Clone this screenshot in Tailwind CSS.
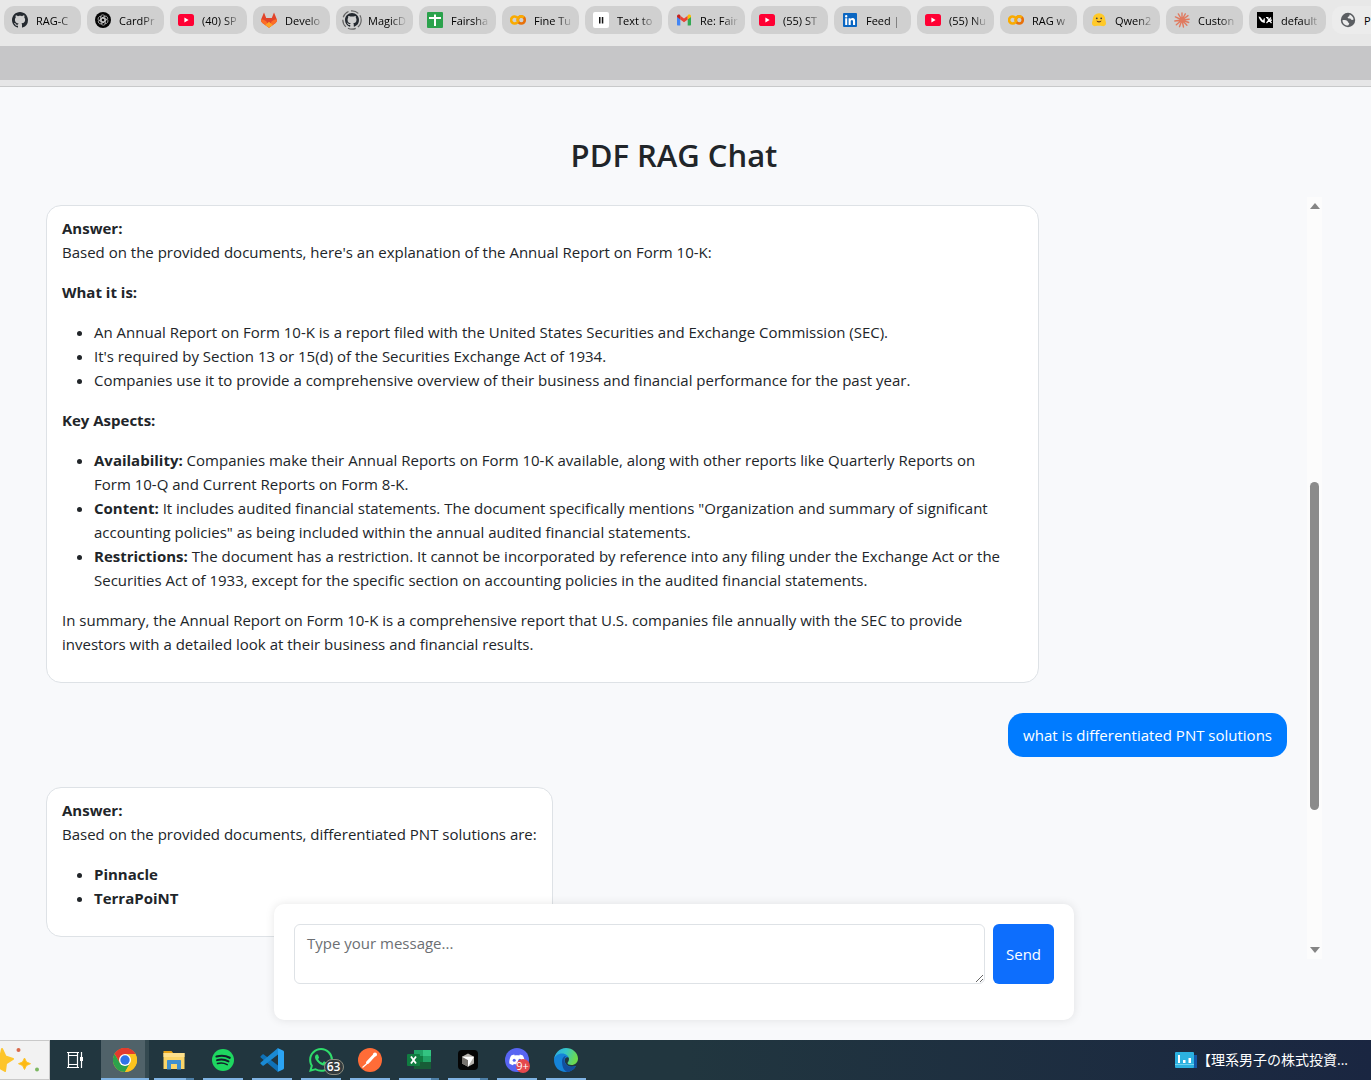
<!DOCTYPE html>
<html lang="en">
<head>
<meta charset="utf-8">
<meta name="viewport" content="width=device-width, initial-scale=1">
<title>PDF RAG Chat</title>
<script src="https://cdn.jsdelivr.net/npm/@tailwindcss/browser@4"></script>
</head>
<body class="flex h-screen flex-col overflow-hidden bg-[#f8f9fb] font-['Open_Sans','Noto_Sans_CJK_JP',sans-serif] text-[#212529]">

<!-- Shared icon symbols -->
<svg class="hidden" aria-hidden="true">
  <symbol id="github" viewBox="0 0 16 16"><path fill="#24292f" d="M8 0C3.58 0 0 3.58 0 8c0 3.54 2.29 6.53 5.47 7.59.4.07.55-.17.55-.38 0-.19-.01-.82-.01-1.49-2.01.37-2.53-.49-2.69-.94-.09-.23-.48-.94-.82-1.13-.28-.15-.68-.52-.01-.53.63-.01 1.08.58 1.23.82.72 1.21 1.87.87 2.33.66.07-.52.28-.87.51-1.07-1.78-.2-3.64-.89-3.64-3.95 0-.87.31-1.59.82-2.15-.08-.2-.36-1.02.08-2.12 0 0 .67-.21 2.2.82.64-.18 1.32-.27 2-.27s1.36.09 2 .27c1.53-1.04 2.2-.82 2.2-.82.44 1.1.16 1.92.08 2.12.51.56.82 1.27.82 2.15 0 3.07-1.87 3.75-3.65 3.95.29.25.54.73.54 1.48 0 1.07-.01 1.93-.01 2.2 0 .21.15.46.55.38A8.01 8.01 0 0 0 16 8c0-4.42-3.58-8-8-8z"/></symbol>
  <symbol id="youtube" viewBox="0 0 16 16"><rect y="2" width="16" height="12" rx="2.6" fill="#ff0033"/><path fill="#fff" d="M6.4 5.6v4.8l4.2-2.4z"/></symbol>
  <symbol id="colab" viewBox="0 0 16 16" fill="none" stroke-width="2.6"><circle cx="11.3" cy="8" r="3.5" stroke="#e8710a"/><path stroke="#f9ab00" d="M7.2 5.7A3.5 3.5 0 1 0 7.2 10.3"/><path stroke="#f9ab00" d="M8.6 10.3 A3.5 3.5 0 0 1 13.7 5.5"/></symbol>
</svg>

<!-- Tab strip -->
<nav aria-label="Tabs" class="flex h-[46px] shrink-0 gap-1.5 overflow-hidden bg-[#e8e8e8] pt-1.5 pl-1 text-[11px] leading-4 text-black">
  <a href="#" class="flex h-7 w-[77px] shrink-0 items-center gap-2 rounded-[10px] bg-[#d0d0d0] pl-2">
    <svg class="size-4 shrink-0"><use href="#github"/></svg>
    <span class="w-[41px] whitespace-nowrap pt-px [mask-image:linear-gradient(to_right,black_55%,transparent_95%)]">RAG-C</span>
  </a>
  <a href="#" class="flex h-7 w-[77px] shrink-0 items-center gap-2 rounded-[10px] bg-[#d0d0d0] pl-2">
    <svg class="size-4 shrink-0" viewBox="0 0 16 16"><circle cx="8" cy="8" r="8" fill="#050505"/><g fill="none" stroke="#ccc" stroke-width=".7"><rect x="5.600" y="2.800" width="4.200" height="7.400" rx="2.100"/><rect x="5.600" y="2.800" width="4.200" height="7.400" rx="2.100" transform="rotate(60 8 8)"/><rect x="5.600" y="2.800" width="4.200" height="7.400" rx="2.100" transform="rotate(120 8 8)"/><rect x="5.600" y="2.800" width="4.200" height="7.400" rx="2.100" transform="rotate(180 8 8)"/><rect x="5.600" y="2.800" width="4.200" height="7.400" rx="2.100" transform="rotate(240 8 8)"/><rect x="5.600" y="2.800" width="4.200" height="7.400" rx="2.100" transform="rotate(300 8 8)"/></g></svg>
    <span class="w-[41px] whitespace-nowrap pt-px [mask-image:linear-gradient(to_right,black_55%,transparent_95%)]">CardPr</span>
  </a>
  <a href="#" class="flex h-7 w-[77px] shrink-0 items-center gap-2 rounded-[10px] bg-[#d0d0d0] pl-2">
    <svg class="size-4 shrink-0"><use href="#youtube"/></svg>
    <span class="w-[41px] whitespace-nowrap pt-px [mask-image:linear-gradient(to_right,black_55%,transparent_95%)]">(40) SP</span>
  </a>
  <a href="#" class="flex h-7 w-[77px] shrink-0 items-center gap-2 rounded-[10px] bg-[#d0d0d0] pl-2">
    <svg class="size-4 shrink-0" viewBox="0 0 16 16"><path fill="#e24329" d="M3 .5 5.2 6h5.6L13 .5l2.8 6.8c.4 1.4 0 2.8-1.200 3.700L8 15.700l-6.600-4.700C.2 10.100-.2 8.700.2 7.300z"/><path fill="#fc6d26" d="M.2 7.300c2 .1 3.900 1.100 5.300 2.200L8 15.700l-6.600-4.700C.2 10.100-.2 8.700.2 7.300zM15.800 7.300c-2 .1-3.900 1.100-5.300 2.200L8 15.700l6.600-4.700c1.200-.9 1.600-2.300 1.200-3.700z"/><path fill="#fca326" d="M4.300 13 8 9.800l3.700 3.200L8 15.700z"/></svg>
    <span class="w-[41px] whitespace-nowrap pt-px [mask-image:linear-gradient(to_right,black_55%,transparent_95%)]">Develo</span>
  </a>
  <a href="#" class="flex h-7 w-[77px] shrink-0 items-center gap-1.5 rounded-[10px] bg-[#d0d0d0] pl-1.5">
    <svg class="size-5 shrink-0" viewBox="0 0 20 20"><circle cx="10" cy="10" r="9.200" fill="none" stroke="#666" stroke-width="1.200" stroke-dasharray="8 2.500"/><use href="#github" x="3" y="3" width="14" height="14"/></svg>
    <span class="w-[41px] whitespace-nowrap pt-px [mask-image:linear-gradient(to_right,black_55%,transparent_95%)]">MagicD</span>
  </a>
  <a href="#" class="flex h-7 w-[77px] shrink-0 items-center gap-2 rounded-[10px] bg-[#d0d0d0] pl-2">
    <svg class="size-4 shrink-0" viewBox="0 0 16 16"><rect width="16" height="16" rx="1" fill="#2ba24c"/><path fill="#fff" d="M2 5h5V2.500h2V5h5v2H9v7H7V7H2z"/></svg>
    <span class="w-[41px] whitespace-nowrap pt-px [mask-image:linear-gradient(to_right,black_55%,transparent_95%)]">Fairsha</span>
  </a>
  <a href="#" class="flex h-7 w-[77px] shrink-0 items-center gap-2 rounded-[10px] bg-[#d0d0d0] pl-2">
    <svg class="size-4 shrink-0"><use href="#colab"/></svg>
    <span class="w-[41px] whitespace-nowrap pt-px [mask-image:linear-gradient(to_right,black_55%,transparent_95%)]">Fine Tu</span>
  </a>
  <a href="#" class="flex h-7 w-[77px] shrink-0 items-center gap-2 rounded-[10px] bg-[#d0d0d0] pl-2">
    <svg class="size-4 shrink-0" viewBox="0 0 16 16"><rect width="16" height="16" rx="2" fill="#fff"/><path fill="#111" d="M6 5h1.500v6.500H6zM8.800 5h1.500v6.500H8.800z"/></svg>
    <span class="w-[41px] whitespace-nowrap pt-px [mask-image:linear-gradient(to_right,black_55%,transparent_95%)]">Text to</span>
  </a>
  <a href="#" class="flex h-7 w-[77px] shrink-0 items-center gap-2 rounded-[10px] bg-[#d0d0d0] pl-2">
    <svg class="size-4 shrink-0" viewBox="0 0 16 16"><path fill="#4285f4" d="M1 4.500v8c0 .6.400 1 1 1h2.300V7z"/><path fill="#34a853" d="M15 4.500v8c0 .6-.4 1-1 1h-2.300V7z"/><path fill="#ea4335" d="M4.300 3.800 8 6.600l3.700-2.800v3.700L8 10.300 4.300 7.500z"/><path fill="#c5221f" d="M1 4.300C1 2.700 2.800 2 4 2.900l.3.300v4.300L1 5z"/><path fill="#fbbc04" d="M15 4.300c0-1.600-1.800-2.300-3-1.400l-.3.300v4.300L15 5z"/></svg>
    <span class="w-[41px] whitespace-nowrap pt-px [mask-image:linear-gradient(to_right,black_55%,transparent_95%)]">Re: Fair</span>
  </a>
  <a href="#" class="flex h-7 w-[77px] shrink-0 items-center gap-2 rounded-[10px] bg-[#d0d0d0] pl-2">
    <svg class="size-4 shrink-0"><use href="#youtube"/></svg>
    <span class="w-[41px] whitespace-nowrap pt-px [mask-image:linear-gradient(to_right,black_55%,transparent_95%)]">(55) ST</span>
  </a>
  <a href="#" class="flex h-7 w-[77px] shrink-0 items-center gap-2 rounded-[10px] bg-[#d0d0d0] pl-2">
    <svg class="size-4 shrink-0" viewBox="0 0 16 16"><rect x="1" y="1" width="14" height="14" rx="1" fill="#0a66c2"/><path fill="#fff" d="M3.200 6.300h2V13h-2zM4.200 3a1.200 1.200 0 1 1 0 2.400 1.200 1.200 0 0 1 0-2.400zM6.600 6.300h2v.9c.4-.7 1.100-1.100 2-1.100 2 0 2.500 1.300 2.500 3.200V13H11V9.700c0-.9-.1-1.800-1.100-1.800S8.700 8.800 8.700 9.600V13H6.600z"/></svg>
    <span class="w-[41px] whitespace-nowrap pt-px [mask-image:linear-gradient(to_right,black_55%,transparent_95%)]">Feed |</span>
  </a>
  <a href="#" class="flex h-7 w-[77px] shrink-0 items-center gap-2 rounded-[10px] bg-[#d0d0d0] pl-2">
    <svg class="size-4 shrink-0"><use href="#youtube"/></svg>
    <span class="w-[41px] whitespace-nowrap pt-px [mask-image:linear-gradient(to_right,black_55%,transparent_95%)]">(55) Nu</span>
  </a>
  <a href="#" class="flex h-7 w-[77px] shrink-0 items-center gap-2 rounded-[10px] bg-[#d0d0d0] pl-2">
    <svg class="size-4 shrink-0"><use href="#colab"/></svg>
    <span class="w-[41px] whitespace-nowrap pt-px [mask-image:linear-gradient(to_right,black_55%,transparent_95%)]">RAG w</span>
  </a>
  <a href="#" class="flex h-7 w-[77px] shrink-0 items-center gap-2 rounded-[10px] bg-[#d0d0d0] pl-2">
    <svg class="size-4 shrink-0" viewBox="0 0 16 16"><path fill="#ffc928" d="M8 1.200a6.300 6.300 0 0 1 6.300 6.300c0 1.200.9 2.700.7 4.300-.2 1.800-2.200 2.700-4 2.200-1.200-.5-4.600-.5-6 0-1.800.5-3.800-.4-4-2.200-.2-1.600.7-3.100.7-4.300A6.300 6.300 0 0 1 8 1.200z"/><circle cx="5.800" cy="6.300" r=".9" fill="#3a3b45"/><circle cx="10.200" cy="6.300" r=".9" fill="#3a3b45"/><path fill="#6b3a1e" d="M5.500 8.600c1.600.7 3.400.7 5 0-.2 1.300-1.200 2-2.500 2s-2.300-.7-2.500-2z"/></svg>
    <span class="w-[41px] whitespace-nowrap pt-px [mask-image:linear-gradient(to_right,black_55%,transparent_95%)]">Qwen2</span>
  </a>
  <a href="#" class="flex h-7 w-[77px] shrink-0 items-center gap-2 rounded-[10px] bg-[#d0d0d0] pl-2">
    <svg class="size-4 shrink-0" viewBox="0 0 16 16"><path stroke="#e07a5f" stroke-width="1.400" stroke-linecap="round" d="M8 8V.9M8 8l3.300-6.200M8 8l6-4.400M8 8l7.200-.8M8 8l6.700 2.500M8 8l4.900 5.300M8 8l1.500 7M8 8l-2.500 6.700M8 8l-5.700 4.700M8 8l-7.200 1M8 8 1.400 4.900M8 8 4.300 1.900"/></svg>
    <span class="w-[41px] whitespace-nowrap pt-px [mask-image:linear-gradient(to_right,black_55%,transparent_95%)]">Custon</span>
  </a>
  <a href="#" class="flex h-7 w-[77px] shrink-0 items-center gap-2 rounded-[10px] bg-[#d0d0d0] pl-2">
    <svg class="size-4 shrink-0" viewBox="0 0 16 16"><rect width="16" height="16" fill="#000"/><path fill="#fff" d="M1.500 4.500c1.600.2 2.600 1 3.200 2.600l1.300 1.300 1-2.400.8.400v4.600L6 10.500c-2-.7-3.800-3-4.500-6z"/><path fill="none" stroke="#fff" stroke-width="1.200" d="m10 5.500 4.500 5.500M9.500 11l4.500-5.500M9 5.500h2.500M12.500 8.200h2.500"/></svg>
    <span class="w-[41px] whitespace-nowrap pt-px [mask-image:linear-gradient(to_right,black_55%,transparent_95%)]">default</span>
  </a>
  <a href="#" aria-current="page" class="flex h-7 min-w-0 flex-1 items-center gap-2 rounded-l-[10px] bg-[#ececec] pl-2">
    <svg class="size-4 shrink-0" viewBox="0 0 16 16"><circle cx="8" cy="8" r="7.200" fill="#5b5e62"/><path fill="#ececec" d="M9.500 2.400c2.200.7 3.900 2.600 4.100 5.100-1 .8-2.300.6-2.900-.4-.3-.7-1.100-.6-1.900-.6-.9 0-1.300-.7-1-1.400.4-.8 1.500-.6 1.600-1.400zM2.400 8.200c1.800-.3 3.800-.2 4.900.9.900.8.400 1.500 1.300 1.700 1 .3.700 1.400-.4 2.800-3 .1-5.600-2.100-5.800-5.400z"/></svg>
    <span class="whitespace-nowrap pt-px">P</span>
  </a>
</nav>
<div class="h-[34px] shrink-0 bg-[#c6c6c8]"></div>
<div class="h-[7px] shrink-0 border-b border-[#c8c9ca] bg-[#e6e6e7]"></div>

<!-- Chat page -->
<main class="relative flex min-h-0 flex-1 flex-col pr-[49px] pb-[81px] pl-[26px] pt-12 text-[15px] leading-6">
  <h1 class="mb-[22px] text-center text-[31px] leading-10 font-semibold">PDF RAG Chat</h1>

  <div class="flex min-h-0 flex-1">
    <section aria-label="Conversation" class="flex min-w-0 flex-1 flex-col items-start gap-[30px] overflow-hidden px-5 pt-2">
      <article class="flex max-w-[80%] shrink-0 flex-col gap-4 rounded-[15px] border border-[#dee2e6] bg-white px-[15px] pt-2.5 pb-[26px]">
        <p><strong>Answer:</strong><br>Based on the provided documents, here's an explanation of the Annual Report on Form 10-K:</p>
        <p><strong>What it is:</strong></p>
        <ul class="list-disc pl-8">
          <li>An Annual Report on Form 10-K is a report filed with the United States Securities and Exchange Commission (SEC).</li>
          <li>It's required by Section 13 or 15(d) of the Securities Exchange Act of 1934.</li>
          <li>Companies use it to provide a comprehensive overview of their business and financial performance for the past year.</li>
        </ul>
        <p><strong>Key Aspects:</strong></p>
        <ul class="list-disc pl-8">
          <li><strong>Availability:</strong> Companies make their Annual Reports on Form 10-K available, along with other reports like Quarterly Reports on Form&nbsp;10-Q and Current Reports on Form 8-K.</li>
          <li><strong>Content:</strong> It includes audited financial statements. The document specifically mentions "Organization and summary of significant accounting policies" as being included within the annual audited financial statements.</li>
          <li><strong>Restrictions:</strong> The document has a restriction. It cannot be incorporated by reference into any filing under the Exchange Act or the Securities Act of 1933, except for the specific section on accounting policies in the audited financial statements.</li>
        </ul>
        <p>In summary, the Annual Report on Form 10-K is a comprehensive report that U.S. companies file annually with the SEC to provide investors with a detailed look at their business and financial results.</p>
      </article>

      <article class="shrink-0 self-end rounded-[15px] bg-[#007bff] px-[15px] py-2.5 text-white">what is differentiated PNT solutions</article>

      <article class="flex max-w-[80%] shrink-0 flex-col gap-4 rounded-[15px] border border-[#dee2e6] bg-white px-[15px] pt-2.5 pb-[26px]">
        <p><strong>Answer:</strong><br>Based on the provided documents, differentiated PNT solutions are:</p>
        <ul class="list-disc pl-8 font-bold">
          <li>Pinnacle</li>
          <li>TerraPoiNT</li>
        </ul>
      </article>
    </section>

    <!-- Scroll bar -->
    <div class="flex w-[15px] flex-col items-center justify-between bg-[#fcfcfc] py-1.5" aria-hidden="true">
      <svg class="h-[6px] w-[10px]" viewBox="0 0 10 6"><path fill="#858585" d="M5 0l5 6H0z"/></svg>
      <div class="flex w-[9px] flex-1 flex-col py-1">
        <div class="grow-[269]"></div>
        <div class="grow-[327] rounded-full bg-[#8b8b8b]"></div>
        <div class="grow-[133]"></div>
      </div>
      <svg class="h-[6px] w-[10px]" viewBox="0 0 10 6"><path fill="#858585" d="M5 6l5-6H0z"/></svg>
    </div>
  </div>

  <!-- Floating composer -->
  <div class="absolute right-[49px] bottom-5 left-[26px] flex justify-center">
    <form class="flex w-full max-w-[800px] gap-2 rounded-[10px] bg-white px-5 pt-5 pb-9 shadow-[0_0_10px_rgba(0,0,0,0.1)]">
      <textarea aria-label="Message" placeholder="Type your message..." class="block h-[60px] min-w-0 flex-1 rounded-md border border-[#dee2e6] bg-white px-3 py-1.5 placeholder:text-[#6c6f73]"></textarea>
      <button type="button" class="w-[61px] rounded-md bg-[#0d6efd] text-white">Send</button>
    </form>
  </div>
</main>

<!-- Taskbar -->
<footer class="flex h-10 shrink-0 bg-linear-to-r from-[#21363f] via-[#21363f] to-[#1a2641] text-white">
  <button type="button" aria-label="Widgets" class="w-[50px] border-y border-r border-[#c9c9c9] bg-[#f2f2f2]">
    <svg class="h-[38px] w-[49px]" viewBox="0 0 49 38"><path fill="#fdc52c" stroke="#fdc52c" stroke-width="2" stroke-linejoin="round" d="M2 8l3.500 7.500L13 18l-7 4.500L5 30l-7-4z"/><path fill="#fdb913" d="M24.500 17l2 4 4 1.700-4 1.800-2 4-2-4-4-1.800 4-1.700z" stroke="#fdc52c" stroke-linejoin="round"/><circle cx="18.500" cy="9" r="2" fill="#d9694a"/><circle cx="37" cy="28.500" r="2" fill="#7cb862"/></svg>
  </button>
  <button type="button" aria-label="Task view" class="flex w-[50px] items-center justify-center">
    <svg class="size-[18px]" viewBox="0 0 18 18" fill="none" stroke="#fff" stroke-width="1.200"><path d="M2.500 4.500h9v9h-9zM1 1.500h12M1 16.500h12M2.500 1v3.500M11.500 1v3.500M2.500 13.500V17M11.500 13.500V17M15.500 1v16"/><path fill="#fff" stroke="none" d="M14 6h3v4h-3z"/></svg>
  </button>
  <button type="button" aria-label="Chrome" class="flex w-[49px] flex-col items-stretch pl-px">
    <span class="flex flex-1 items-center justify-center border-r-4 border-[#344950] bg-[#506269] pt-0.5 pl-1">
      <svg class="size-6" viewBox="0 0 24 24"><circle cx="12" cy="12" r="12" fill="#fcc31e"/><path fill="#e33b2e" d="M12 12 1.600 6a12 12 0 0 1 20.800 0z"/><path fill="#e33b2e" d="M12 6h10.400A12 12 0 0 0 1.600 6l5.200 9z"/><path fill="#2ca24c" d="M1.600 6a12 12 0 0 0 10.400 18l5.200-9L12 18l-5.200-3z"/><path fill="#fcc31e" d="M12 6h10.400A12 12 0 0 1 12 24l5.200-9z"/><circle cx="12" cy="12" r="6" fill="#fff"/><circle cx="12" cy="12" r="4.700" fill="#2f73e8"/></svg>
    </span>
    <span class="h-0.5 bg-[#80b4e4]"></span>
  </button>
  <button type="button" aria-label="File Explorer" class="flex w-[49px] flex-col items-center">
    <span class="flex flex-1 items-center pt-0.5"><svg class="size-6" viewBox="0 0 24 24"><path fill="#e8a317" d="M1.500 3h8l2 2.500H1.500z"/><path fill="#fbd568" d="M1.500 5h21v16h-21z"/><path fill="#fde08c" d="M1.500 5h21v4h-21z"/><path fill="#3f8fd0" d="M6 12h12c.6 0 1 .4 1 1v8.500h-4V16H9v5.500H5V13c0-.6.400-1 1-1z"/></svg></span>
    <span class="h-0.5 w-10 border-r-8 border-[#4e80a8] bg-[#80b4e4]"></span>
  </button>
  <button type="button" aria-label="Spotify" class="flex w-[49px] flex-col items-center">
    <span class="flex flex-1 items-center pt-0.5"><svg class="size-[22px]" viewBox="0 0 22 22"><circle cx="11" cy="11" r="11" fill="#1ed760"/><g fill="none" stroke="#12202a" stroke-linecap="round"><path stroke-width="2.200" d="M4.500 7.500c4.500-1.200 9.500-.8 13.200 1.300"/><path stroke-width="1.900" d="M5 11.200c4-1.100 8-.7 11.500 1.200"/><path stroke-width="1.600" d="M5.500 14.500c3.300-.9 6.700-.5 9.700 1.100"/></g></svg></span>
    <span class="h-0.5 w-10 bg-[#80b4e4]"></span>
  </button>
  <button type="button" aria-label="Visual Studio Code" class="flex w-[49px] flex-col items-center">
    <span class="flex flex-1 items-center pt-0.5"><svg class="size-6" viewBox="0 0 24 24"><path fill="#0f72b8" d="M.6 8.200 2.500 6.500c.4-.3.900-.3 1.300 0L18 17.500V24L.7 9.600c-.4-.4-.4-1-.1-1.400z"/><path fill="#1a8ad4" d="M.6 15.800l1.900 1.700c.4.300.9.300 1.300 0L18 6.500V0L.7 14.400c-.4.400-.4 1-.1 1.400z"/><path fill="#2ba4f4" d="M17.500 0 23 2.500c.6.300 1 .8 1 1.500v16c0 .7-.4 1.200-1 1.500L17.500 24c.3-.2.500-.7.500-1.200V1.200c0-.5-.2-1-.5-1.200z"/></svg></span>
    <span class="h-0.5 w-10 bg-[#80b4e4]"></span>
  </button>
  <button type="button" aria-label="WhatsApp" class="flex w-[49px] flex-col items-center">
    <span class="relative flex flex-1 items-center pt-0.5"><svg class="size-6" viewBox="0 0 24 24"><path fill="#2fdc6b" d="M17.472 14.382c-.297-.149-1.758-.867-2.030-.967-.273-.099-.471-.148-.670.150-.197.297-.767.966-.940 1.164-.173.199-.347.223-.644.075-.297-.150-1.255-.463-2.390-1.475-.883-.788-1.480-1.761-1.653-2.059-.173-.297-.018-.458.130-.606.134-.133.298-.347.446-.520.149-.174.198-.298.298-.497.099-.198.050-.371-.025-.520-.075-.149-.669-1.612-.916-2.207-.242-.579-.487-.500-.669-.510-.173-.008-.371-.010-.570-.010-.198 0-.520.074-.792.372-.272.297-1.040 1.016-1.040 2.479 0 1.462 1.065 2.875 1.213 3.074.149.198 2.096 3.200 5.077 4.487.709.306 1.262.489 1.694.625.712.227 1.360.195 1.871.118.571-.085 1.758-.719 2.006-1.413.248-.694.248-1.289.173-1.413-.074-.124-.272-.198-.570-.347m-5.421 7.403h-.004a9.870 9.870 0 0 1-5.031-1.378l-.361-.214-3.741.982.998-3.648-.235-.374a9.860 9.860 0 0 1-1.510-5.260c.001-5.450 4.436-9.884 9.888-9.884 2.640 0 5.122 1.030 6.988 2.898a9.825 9.825 0 0 1 2.893 6.994c-.003 5.450-4.437 9.884-9.885 9.884m8.413-18.297A11.815 11.815 0 0 0 12.050 0C5.495 0 .160 5.335.157 11.892c0 2.096.547 4.142 1.588 5.945L.057 24l6.305-1.654a11.882 11.882 0 0 0 5.683 1.448h.005c6.554 0 11.890-5.335 11.893-11.893a11.821 11.821 0 0 0-3.480-8.413z"/></svg>
      <span class="absolute top-[19px] left-[15px] flex h-4 w-5 items-center justify-center rounded-full border border-[#8d8d80] bg-[#333b3d] text-xs leading-4 font-semibold">63</span></span>
    <span class="h-0.5 w-10 bg-[#80b4e4]"></span>
  </button>
  <button type="button" aria-label="Postman" class="flex w-[49px] flex-col items-center">
    <span class="flex flex-1 items-center pt-0.5"><svg class="size-6" viewBox="0 0 24 24"><circle cx="12" cy="12" r="12" fill="#ff6c37"/><path stroke="#fff" stroke-width="3" stroke-linecap="round" d="M9.500 14.500 17 6.500"/><path stroke="#fff" stroke-width="1.200" d="M4.500 19.500 13 12"/><circle cx="17" cy="6.500" r="2" fill="#fff"/></svg></span>
    <span class="h-0.5 w-10 bg-[#80b4e4]"></span>
  </button>
  <button type="button" aria-label="Excel" class="flex w-[49px] flex-col items-center">
    <span class="flex flex-1 items-center pt-0.5"><svg class="h-[22px] w-6" viewBox="0 0 24 22"><path fill="#21a366" d="M7 1h17v19H7z"/><path fill="#33c481" d="M16 1h8v6h-8z"/><path fill="#107c41" d="M7 7h9v7H7z"/><path fill="#185c37" d="M7 13h17v7H7z"/><rect y="5" width="13" height="12" rx="1" fill="#107c41"/><path stroke="#fff" stroke-width="1.800" d="m4 7.500 5 7M9 7.500l-5 7"/></svg></span>
    <span class="h-0.5 w-10 border-r-8 border-[#4e80a8] bg-[#80b4e4]"></span>
  </button>
  <button type="button" aria-label="Cursor" class="flex w-[49px] flex-col items-center">
    <span class="flex flex-1 items-center pt-0.5"><svg class="size-5" viewBox="0 0 20 20"><rect width="20" height="20" rx="4" fill="#050505"/><path fill="#b5b2ad" d="m10 3.500 6 3.300v6.600l-6 3.300-6-3.300V6.800z"/><path fill="#77736e" d="M4 6.800 10 10v6.700l-6-3.300z"/><path fill="#fff" d="M4 6.800h12l-6 9.900V10z"/></svg></span>
    <span class="h-0.5 w-10 border-r-8 border-[#4e80a8] bg-[#80b4e4]"></span>
  </button>
  <button type="button" aria-label="Discord" class="flex w-[49px] flex-col items-center">
    <span class="relative flex flex-1 items-center pt-0.5"><svg class="size-6" viewBox="0 0 24 24"><circle cx="12" cy="12" r="12" fill="#5865f2"/><path fill="#fff" d="M9.200 6.500c-1.200.2-2.200.6-3 1C4.800 9.700 4.100 12.400 4.300 15.500c1.200.9 2.400 1.500 3.700 1.800l.8-1.300c2.100.6 4.300.6 6.400 0l.8 1.300c1.300-.3 2.500-.9 3.700-1.800.2-3.100-.5-5.800-1.900-8-.8-.4-1.800-.8-3-1l-.5 1c-1.500-.2-3.100-.2-4.600 0z"/><circle cx="9.200" cy="12.300" r="1.500" fill="#5865f2"/><circle cx="14.800" cy="12.300" r="1.500" fill="#5865f2"/></svg>
      <span class="absolute top-[19px] left-[11px] flex size-3.5 items-center justify-center rounded-full bg-[#e5484d] text-[11px] leading-3">9+</span></span>
    <span class="h-0.5 w-10 bg-[#80b4e4]"></span>
  </button>
  <button type="button" aria-label="Edge" class="flex w-[49px] flex-col items-center">
    <span class="flex flex-1 items-center pt-0.5"><svg class="size-6" viewBox="0 0 24 24"><defs><linearGradient id="edgeTop" x1="0" y1="0" x2="1" y2=".3"><stop offset="0" stop-color="#2ba6e8"/><stop offset=".5" stop-color="#35c6c8"/><stop offset="1" stop-color="#6cd94e"/></linearGradient></defs><path fill="#1583d8" d="M0 12c0-5 4-8 8-8 4.500 0 8 2.500 8 6-4-2-6 1-5 4 1 4 6 6 11 4-2 3.500-5.500 6-10 6C5 24 0 19 0 12z"/><path fill="#124f9e" d="M8 13c0-3 2-5 4-5-2 2-2 5-1 7 2 4 7 4.500 11 3-2 3.500-5.500 6-9 6-3.500-1.500-5-6-5-11z"/><path fill="url(#edgeTop)" d="M0 12C.500 5 5.500 0 12 0s12 5 12 10.500c0 4-3 6.500-6.500 6.500-2.500 0-4-1-4-2 0-.7 1.500-1.500 1.500-4 0-3-3-5.500-7-5.500S.5 8 0 12z"/></svg></span>
    <span class="h-0.5 w-10 bg-[#80b4e4]"></span>
  </button>
  <a href="#" class="mr-[23px] ml-auto flex items-center text-sm">
    <svg class="h-4 w-[22px]" viewBox="0 0 22 16"><path fill="#1458a8" d="M12 3h10v13H12z"/><rect width="19" height="16" rx="1" fill="#2cb1e0"/><path fill="#fff" d="M3 3h2v8H3zM8 8h2.500v3H8zM13.500 6H16v5h-2.500z"/><path fill="#6fd4f0" d="M0 12h19v1H0z"/></svg>
    <span>【理系男子の株式投資...</span>
  </a>
</footer>
</body>
</html>
